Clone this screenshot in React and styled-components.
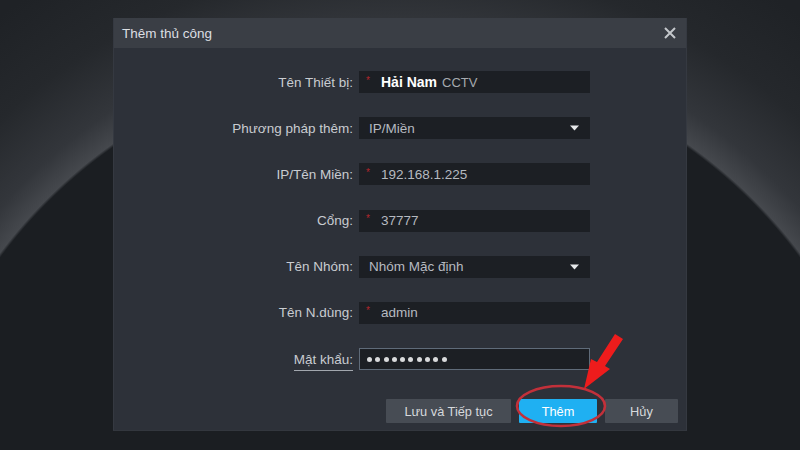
import React from 'react';
import styled, { createGlobalStyle } from 'styled-components';

const GlobalStyle = createGlobalStyle`
  html, body {
    margin: 0;
    padding: 0;
    background: #1c1f23;
  }
  * {
    box-sizing: border-box;
  }
`;

// Page backdrop with the big dark disc and its soft rim
const Screen = styled.div`
  position: relative;
  width: 800px;
  height: 450px;
  overflow: hidden;
  font-family: "Liberation Sans", Arial, sans-serif;
  background:
    radial-gradient(circle at 400px 553px, #1b1e22 0, #1b1e22 497px, #45484d 500px, #33363b 528px, #25282c 590px, #1f2226 670px);
  padding: 18px 0 0 113px;
`;

const Dialog = styled.div`
  width: 574px;
  height: 413px;
  background: #2d3139;
  display: flex;
  flex-direction: column;
  border-left: 1px solid #353941;
  border-right: 1px solid #353941;
  border-bottom: 1px solid #33373e;
`;

const TitleBar = styled.div`
  height: 30px;
  background: #3a3e45;
  display: flex;
  align-items: center;
  justify-content: space-between;
  padding: 0 9px 0 8px;
`;

const Title = styled.span`
  font-size: 13.5px;
  color: #dcdfe3;
`;

const CloseButton = styled.button`
  width: 14px;
  height: 14px;
  padding: 0;
  border: none;
  background: none;
  display: flex;
  align-items: center;
  justify-content: center;
  cursor: pointer;
`;

const Body = styled.div`
  flex: 1;
  display: flex;
  flex-direction: column;
  padding: 23px 0 7px;
`;

const Form = styled.div`
  display: grid;
  grid-template-columns: 239px 231px;
  grid-auto-rows: 22px;
  column-gap: 6px;
  row-gap: 24.2px;
`;

const Label = styled.label`
  justify-self: end;
  align-self: center;
  font-size: 13.5px;
  color: #c9ccd1;
  white-space: nowrap;
  padding-bottom: ${({ $underline }) => ($underline ? '3px' : '0')};
  margin-bottom: ${({ $underline }) => ($underline ? '-4px' : '0')};
  border-bottom: ${({ $underline }) => ($underline ? '1px solid #a2a7ae' : 'none')};
`;

const Field = styled.div`
  display: flex;
  align-items: center;
  background: #1c1f24;
  border: 1px solid ${({ $focused }) => ($focused ? '#5f6b79' : '#1c1f24')};
  padding: 0 ${({ $select }) => ($select ? '10px' : '6px')} 0 ${({ $select }) => ($select ? '9px' : '6px')};
  font-size: 13.5px;
  color: #b6bac0;
`;

const Required = styled.span`
  color: #b3262c;
  font-size: 10px;
  width: 15px;
  margin-top: -4px;
`;

const Value = styled.span`
  flex: 1;
  white-space: nowrap;
`;

const Brand = styled.span`
  font-weight: bold;
  font-size: 14px;
  color: #ffffff;
  margin-right: 5px;
`;

const Muted = styled.span`
  color: #a6aaaf;
  font-size: 13px;
`;

const Dots = styled.div`
  display: flex;
  gap: 3.3px;
  padding-left: 1px;
`;

const Dot = styled.span`
  width: 5px;
  height: 5px;
  border-radius: 50%;
  background: #d9dadc;
`;

const Footer = styled.div`
  margin-top: auto;
  display: flex;
  justify-content: flex-end;
  gap: 8px;
  padding-right: 8px;
`;

const Button = styled.button`
  height: 24px;
  width: ${({ $w }) => $w}px;
  border: none;
  border-radius: 1px;
  background: ${({ $primary }) => ($primary ? '#1fb0f2' : '#474c54')};
  color: ${({ $primary }) => ($primary ? '#ffffff' : '#d6d9dc')};
  font-family: "Liberation Sans", Arial, sans-serif;
  font-size: 12.8px;
  cursor: pointer;
`;

// Red annotation drawn over the dialog
const Annotation = styled.svg`
  position: absolute;
  left: 0;
  top: 0;
  pointer-events: none;
`;

const Caret = () => (
  <svg width="9" height="6" viewBox="0 0 9 6">
    <path d="M0 0.5 H9 L4.5 5.5 Z" fill="#e6e8ea" />
  </svg>
);

const rows = [
  { label: 'Tên Thiết bị:', required: true, brand: true },
  { label: 'Phương pháp thêm:', value: 'IP/Miền', select: true },
  { label: 'IP/Tên Miền:', value: '192.168.1.225', required: true },
  { label: 'Cổng:', value: '37777', required: true },
  { label: 'Tên Nhóm:', value: 'Nhóm Mặc định', select: true },
  { label: 'Tên N.dùng:', value: 'admin', required: true },
];

export default function App() {
  return (
    <Screen>
      <GlobalStyle />
      <Dialog>
        <TitleBar>
          <Title>Thêm thủ công</Title>
          <CloseButton aria-label="close">
            <svg width="12" height="12" viewBox="0 0 12 12">
              <path d="M1 1 L11 11 M11 1 L1 11" stroke="#c4c7cb" strokeWidth="2" />
            </svg>
          </CloseButton>
        </TitleBar>
        <Body>
          <Form>
            {rows.map((r) => (
              <React.Fragment key={r.label}>
                <Label>{r.label}</Label>
                <Field $select={r.select}>
                  {r.required && <Required>*</Required>}
                  <Value>
                    {r.brand ? (
                      <>
                        <Brand>Hải Nam</Brand>
                        <Muted>CCTV</Muted>
                      </>
                    ) : (
                      r.value
                    )}
                  </Value>
                  {r.select && <Caret />}
                </Field>
              </React.Fragment>
            ))}
            <Label $underline>Mật khẩu:</Label>
            <Field $focused>
              <Dots>
                {Array.from({ length: 10 }).map((_, i) => (
                  <Dot key={i} />
                ))}
              </Dots>
            </Field>
          </Form>
          <Footer>
            <Button $w={125}>Lưu và Tiếp tục</Button>
            <Button $w={78} $primary>
              Thêm
            </Button>
            <Button $w={73}>Hủy</Button>
          </Footer>
        </Body>
      </Dialog>
      <Annotation width="800" height="450" viewBox="0 0 800 450">
        <ellipse cx="561" cy="406" rx="44" ry="20" fill="none" stroke="#c2303a" strokeWidth="2.6" />
        <path d="M623 339 L605 366 L610 369 L584 389 L591 359 L597 362 L615 334 Z" fill="#ee1c1c" />
      </Annotation>
    </Screen>
  );
}
